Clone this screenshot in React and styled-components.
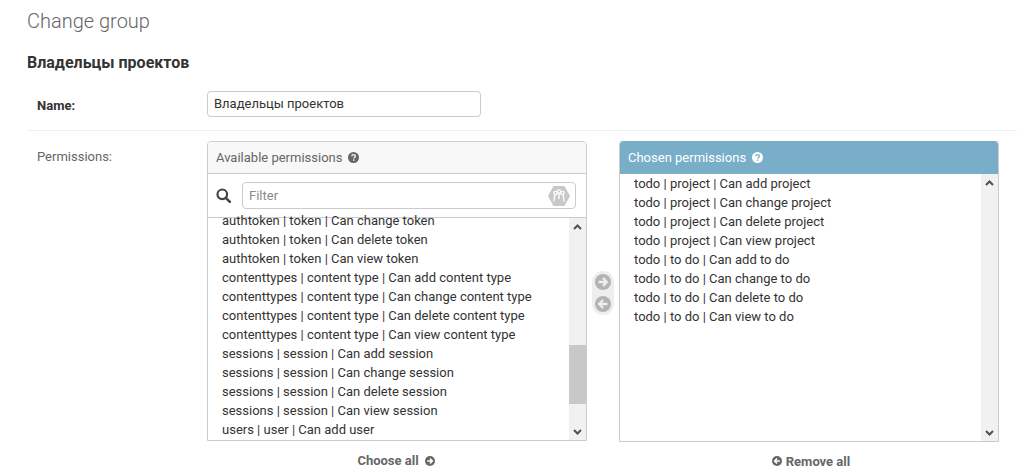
import React from "react";
import styled, { createGlobalStyle } from "styled-components";

const available = [
  "authtoken | token | Can change token",
  "authtoken | token | Can delete token",
  "authtoken | token | Can view token",
  "contenttypes | content type | Can add content type",
  "contenttypes | content type | Can change content type",
  "contenttypes | content type | Can delete content type",
  "contenttypes | content type | Can view content type",
  "sessions | session | Can add session",
  "sessions | session | Can change session",
  "sessions | session | Can delete session",
  "sessions | session | Can view session",
  "users | user | Can add user",
];

const chosen = [
  "todo | project | Can add project",
  "todo | project | Can change project",
  "todo | project | Can delete project",
  "todo | project | Can view project",
  "todo | to do | Can add to do",
  "todo | to do | Can change to do",
  "todo | to do | Can delete to do",
  "todo | to do | Can view to do",
];

const GlobalStyle = createGlobalStyle`
  html, body {
    margin: 0;
    padding: 0;
    background: #fff;
    overflow: hidden;
  }
  body {
    font-family: Roboto, "Liberation Sans", sans-serif;
    font-size: 13px;
    color: #333;
  }
`;

const Page = styled.div`
  width: 1017px;
  height: 475px;
  padding: 10px 0 0 27px;
  box-sizing: border-box;
  overflow: hidden;
`;

const Title = styled.h1`
  margin: 0;
  font-size: 20px;
  line-height: 22px;
  font-weight: 300;
  color: #666;
`;

const GroupName = styled.h2`
  margin: 22px 0 0;
  font-size: 16px;
  line-height: 18px;
  font-weight: 700;
  color: #333;
`;

const NameRow = styled.div`
  display: flex;
  align-items: center;
  margin-top: 19px;
  padding: 0 0 13px 10px;
  border-bottom: 1px solid #eee;
`;

const Label = styled.label`
  width: 170px;
  font-size: 13px;
  font-weight: ${(p) => (p.$required ? 700 : 400)};
  color: ${(p) => (p.$required ? "#333" : "#666")};
`;

const RequiredLabel = styled(Label)`
  padding-top: 2px;
`;

const TextInput = styled.div`
  width: 274px;
  height: 26px;
  box-sizing: border-box;
  padding: 0 6px;
  border: 1px solid #ccc;
  border-radius: 4px;
  font-size: 13px;
  line-height: 24px;
  color: #333;
`;

const PermissionsRow = styled.div`
  display: flex;
  padding: 10px 0 0 10px;
`;

const PermissionsLabel = styled(Label)`
  padding-top: 8px;
`;

const Selector = styled.div`
  display: flex;
  align-items: flex-start;
`;

const Column = styled.div`
  width: 380px;
  display: flex;
  flex-direction: column;
`;

const Box = styled.div`
  height: ${(p) => (p.$chosen ? 301 : 300)}px;
  box-sizing: border-box;
  display: flex;
  flex-direction: column;
  border: 1px solid #ccc;
  border-top-color: ${(p) => (p.$chosen ? "#79aec8" : "#ccc")};
  border-radius: 4px 4px 0 0;
  overflow: hidden;
`;

const BoxHeader = styled.div`
  height: 32px;
  flex: none;
  display: flex;
  align-items: center;
  gap: 6px;
  padding: 0 8px ${(p) => (p.$chosen ? 1 : 0)}px;
  box-sizing: border-box;
  background: ${(p) => (p.$chosen ? "#79aec8" : "#f8f8f8")};
  color: ${(p) => (p.$chosen ? "#fff" : "#666")};
  border-bottom: ${(p) => (p.$chosen ? "none" : "1px solid #ccc")};
  font-size: 13px;
  font-weight: 400;
`;

const FilterBar = styled.div`
  height: 44px;
  flex: none;
  display: flex;
  align-items: center;
  gap: 11px;
  padding: 0 10px 0 8px;
  border-bottom: 1px solid #ccc;
  box-sizing: border-box;
`;

const FilterInput = styled.div`
  flex: 1;
  height: 27px;
  box-sizing: border-box;
  display: flex;
  align-items: center;
  justify-content: space-between;
  padding: 0 5px 0 6px;
  border: 1px solid #ccc;
  border-radius: 4px;
  color: #8a8a8a;
  font-size: 13px;
`;

const ListArea = styled.div`
  flex: 1;
  min-height: 0;
  display: flex;
`;

const List = styled.ul`
  flex: 1;
  margin: 0;
  padding: 0 0 0 14px;
  list-style: none;
  overflow: hidden;
  margin-top: ${(p) => (p.$scrolled ? "-7px" : "0")};
`;

const Item = styled.li`
  height: 19px;
  line-height: 19px;
  font-size: 13px;
  color: #333;
  white-space: nowrap;
`;

const Track = styled.div`
  width: 17px;
  flex: none;
  display: flex;
  flex-direction: column;
  background: #f1f1f1;
`;

const TrackArrow = styled.div`
  height: 17px;
  flex: none;
  display: flex;
  align-items: center;
  justify-content: center;
`;

const TrackSpace = styled.div`
  flex: ${(p) => p.$grow};
`;

const Thumb = styled.div`
  height: ${(p) => p.$height}px;
  flex: none;
  background: #c8c8c8;
`;

const Arrows = styled.div`
  width: 22px;
  height: 44px;
  flex: none;
  margin: 130px 5px 0;
  display: flex;
  flex-direction: column;
  align-items: center;
  justify-content: center;
  gap: 6px;
  border-radius: 11px;
  background: #eee;
`;

const BoxFooter = styled.div`
  display: flex;
  align-items: center;
  justify-content: center;
  gap: ${(p) => p.$gap}px;
  margin-top: 11px;
  height: 16px;
  font-size: 13px;
  font-weight: 700;
  color: #666;
  padding-left: ${(p) => p.$shiftRight || 0}px;
  padding-right: ${(p) => p.$shiftLeft || 0}px;
`;

const FooterIcon = styled.span`
  display: flex;
  margin-top: 2px;
`;

const QuestionIcon = ({ color, fg }) => (
  <svg width="11" height="11" viewBox="0 0 11 11">
    <circle cx="5.5" cy="5.5" r="5.5" fill={color} />
    <path
      d="M3.7 4.2c.1-1 .9-1.6 1.9-1.6s1.8.6 1.8 1.5c0 1.3-1.5 1.2-1.5 2.3"
      fill="none"
      stroke={fg}
      strokeWidth="1.3"
    />
    <rect x="4.95" y="7.4" width="1.4" height="1.4" fill={fg} />
  </svg>
);

const SearchIcon = () => (
  <svg width="15" height="15" viewBox="0 0 15 15">
    <circle cx="6.3" cy="6.3" r="4.8" fill="none" stroke="#444" strokeWidth="2.2" />
    <path d="M9.8 9.8l4 4" stroke="#444" strokeWidth="2.6" strokeLinecap="round" />
  </svg>
);

// password manager badge sitting at the end of the filter field
const KeysIcon = () => (
  <svg width="22" height="20" viewBox="0 0 22 20">
    <path d="M5.5 0h11L22 10l-5.500 10h-11L0 10z" fill="#c8c8c8" />
    <g fill="none" stroke="#fff" strokeWidth="1.3">
      <circle cx="7.500" cy="7" r="1.700" />
      <circle cx="11" cy="5.500" r="1.700" />
      <circle cx="14.500" cy="7" r="1.700" />
      <path d="M7 8.700L5.800 15.500M11 7.200V13M15 8.700L16.200 15.500" />
    </g>
  </svg>
);

const Chevron = ({ up }) => (
  <svg width="9" height="6" viewBox="0 0 9 6">
    <path
      d={up ? "M1 5l3.500-3.500L8 5" : "M1 1l3.500 3.500L8 1"}
      fill="none"
      stroke="#505050"
      strokeWidth="2"
    />
  </svg>
);

const RoundArrow = ({ right, size = 10, bg = "#666", fg = "#fff" }) => (
  <svg width={size} height={size} viewBox="0 0 16 16">
    <circle cx="8" cy="8" r="8" fill={bg} />
    <path
      d={right ? "M3.500 8h8M8 4l3.800 4L8 12" : "M12.500 8h-8M8 4L4.200 8 8 12"}
      fill="none"
      stroke={fg}
      strokeWidth="2.400"
    />
  </svg>
);

const App = () => (
  <Page>
    <GlobalStyle />
    <Title>Change group</Title>
    <GroupName>Владельцы проектов</GroupName>
    <NameRow>
      <RequiredLabel $required>Name:</RequiredLabel>
      <TextInput>Владельцы проектов</TextInput>
    </NameRow>
    <PermissionsRow>
      <PermissionsLabel>Permissions:</PermissionsLabel>
      <Selector>
        <Column>
          <Box>
            <BoxHeader>
              Available permissions <QuestionIcon color="#666" fg="#f8f8f8" />
            </BoxHeader>
            <FilterBar>
              <SearchIcon />
              <FilterInput>
                Filter
                <KeysIcon />
              </FilterInput>
            </FilterBar>
            <ListArea>
              <List $scrolled>
                {available.map((item) => (
                  <Item key={item}>{item}</Item>
                ))}
              </List>
              <Track>
                <TrackArrow>
                  <Chevron up />
                </TrackArrow>
                <TrackSpace $grow={110} />
                <Thumb $height={59} />
                <TrackSpace $grow={19} />
                <TrackArrow>
                  <Chevron />
                </TrackArrow>
              </Track>
            </ListArea>
          </Box>
          <BoxFooter $gap={6} $shiftLeft={2}>
            Choose all
            <FooterIcon>
              <RoundArrow right />
            </FooterIcon>
          </BoxFooter>
        </Column>
        <Arrows>
          <RoundArrow right size={16} bg="#b3b3b3" fg="#eee" />
          <RoundArrow size={16} bg="#b3b3b3" fg="#eee" />
        </Arrows>
        <Column>
          <Box $chosen>
            <BoxHeader $chosen>
              Chosen permissions <QuestionIcon color="#fff" fg="#79aec8" />
            </BoxHeader>
            <ListArea>
              <List>
                {chosen.map((item) => (
                  <Item key={item}>{item}</Item>
                ))}
              </List>
              <Track>
                <TrackArrow>
                  <Chevron up />
                </TrackArrow>
                <TrackSpace $grow={1} />
                <TrackArrow>
                  <Chevron />
                </TrackArrow>
              </Track>
            </ListArea>
          </Box>
          <BoxFooter $gap={4} $shiftRight={4}>
            <RoundArrow /> Remove all
          </BoxFooter>
        </Column>
      </Selector>
    </PermissionsRow>
  </Page>
);

export default App;
